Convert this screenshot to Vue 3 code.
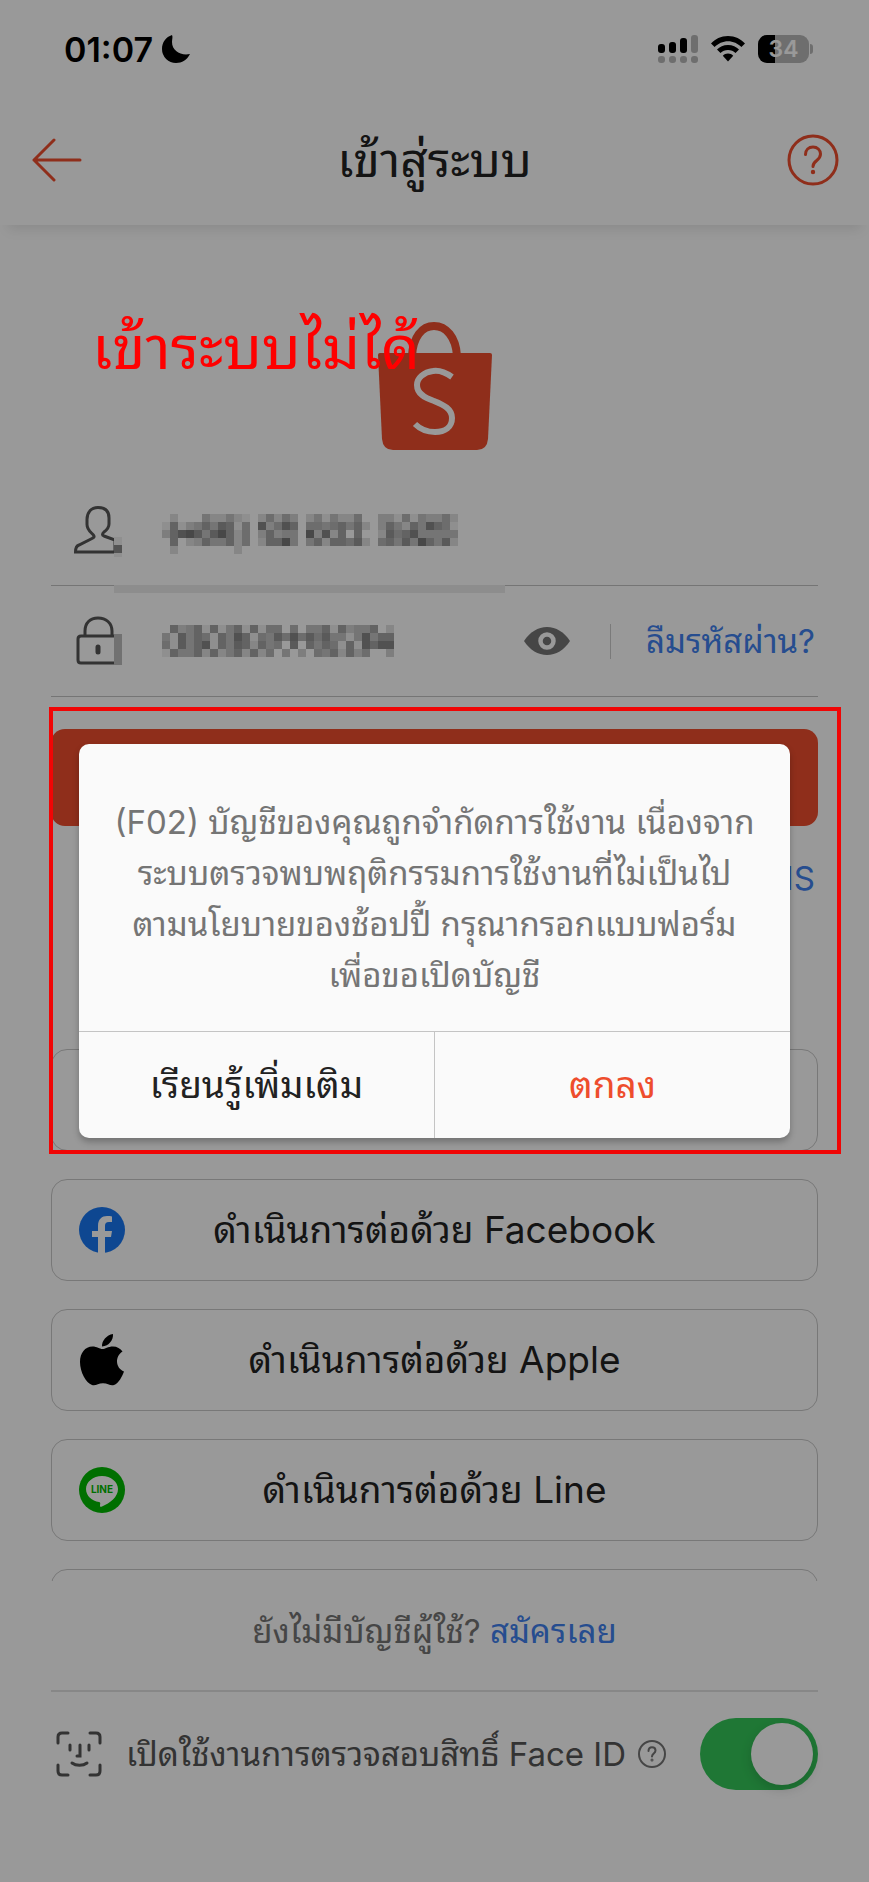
<script setup>
import { ref } from 'vue'

const faceId = ref(true)

const shades = ['', '#eee', '#dfdfdf', '#d2d2d2', '#c4c4c4', '#b6b6b6', '#a6a6a6', '#979797', '#888', '#787878']

const phoneMask = [
  '.2...422421.25253.2414225..3315143352',
  '16134647615.83586.55456462.3642648651',
  '36897479625.36344.93826.6..2756844444',
  '.6.23644625.26694.46266572.5647496472',
  '.2.......2...........................',
]
const passwordMask = [
  '.63461614616155.5.446163446.22',
  '41746516486154758575744148466',
  '517468164762645.7.64651618688',
  '16446262462625.4.3.5462635..3',
]

// Turns rows of shade digits into square cells
function cells(rows) {
  return rows.flatMap((row, y) =>
    [...row].map((c, x) => ({ x, y, fill: shades[Number(c)] || '' })).filter((cell) => cell.fill),
  )
}

const phoneCells = cells(phoneMask)
const passwordCells = cells(passwordMask)
</script>

<template>
  <div class="page">
    <div class="status">
      <span class="time">01:07</span>
      <svg class="moon" width="28" height="28" viewBox="0 0 28 28">
        <path d="M10 0C4 2 0 7 0 14a14 14 0 0 0 14 14c6 0 11-3 14-9-9 2-18-3-18-12 0-3 1-5 0-7z" />
      </svg>
      <span class="spacer"></span>
      <svg width="40" height="28" viewBox="0 0 40 28">
        <rect x="0" y="9" width="7" height="9" rx="3" />
        <rect x="11" y="7" width="7" height="11" rx="3" />
        <rect x="22" y="3" width="7" height="15" rx="3" />
        <g fill="#b8b8b8">
          <rect x="33" y="0" width="7" height="18" rx="3" />
          <rect x="0" y="21" width="7" height="7" rx="3" />
          <rect x="11" y="21" width="7" height="7" rx="3" />
          <rect x="22" y="21" width="7" height="7" rx="3" />
          <rect x="33" y="21" width="7" height="7" rx="3" />
        </g>
      </svg>
      <svg class="wifi" width="34" height="26" viewBox="0 0 34 26">
        <path d="M17 0C10 0 4 3 0 7.500L3.600 11C7 7.500 12 5.200 17 5.200s10 2.300 13.400 5.800L34 7.500C30 3 24 0 17 0z" />
        <path d="M17 9c-4.500 0-8.400 1.800-11 4.600l3.500 3.500c1.900-1.900 4.500-3.100 7.500-3.100s5.600 1.200 7.500 3.100l3.500-3.500C25.400 10.800 21.500 9 17 9z" />
        <path d="M17 17.600c-2 0-3.900.8-5.200 2.100L17 25.400l5.200-5.700c-1.300-1.300-3.200-2.100-5.200-2.100z" />
      </svg>
      <span class="battery"><b>34</b></span>
      <span class="nub"></span>
    </div>

    <header class="header">
      <button class="icon-button" aria-label="ย้อนกลับ">
        <svg width="50" height="44" viewBox="0 0 50 44" fill="none" stroke="#ee4d2d" stroke-width="3" stroke-linecap="round" stroke-linejoin="round">
          <path d="M22 2 2 22l20 20M2 22h46" />
        </svg>
      </button>
      <h1>เข้าสู่ระบบ</h1>
      <button class="icon-button" aria-label="ช่วยเหลือ">
        <svg width="52" height="52" viewBox="0 0 52 52" fill="none" stroke="#ee4d2d" stroke-width="3" stroke-linecap="round">
          <circle cx="26" cy="26" r="24" />
          <path d="M18.500 20.500c0-4.500 3.200-7.500 7.500-7.500s7.500 3 7.500 7c0 3-1.500 4.800-4 6.700-2.500 1.900-3.500 3-3.500 5.800" />
          <circle cx="26" cy="38" r="1.200" fill="#ee4d2d" stroke-width="2" />
        </svg>
      </button>
    </header>

    <main class="main">
      <svg class="bag" width="114" height="128" viewBox="0 0 114 128">
        <path d="M34 34C35 15 44 4 56 4s22 11 23 30" fill="none" stroke="#ee4d2d" stroke-width="8" />
        <path d="M2 31h110q2 0 2 2l-4 84q-1 11-11 11H15q-10 0-11-11L0 33q0-2 2-2z" fill="#ee4d2d" />
        <path d="M74 55C67 50 61 48 55 49 46 50 39 56 39 63c0 9 8 13 17 16 10 4 18 8 18 17 0 9-7 14-17 14-8 0-15-3-20-8" fill="none" stroke="#fff" stroke-width="6" />
      </svg>

      <form class="form" @submit.prevent>
        <div class="field">
          <label for="phone" aria-label="หมายเลขโทรศัพท์">
            <svg width="48" height="54" viewBox="0 0 48 54">
              <path d="M24 4.500c-7 0-11 5-11 12v5c0 5 3 7 6 10 2 2 1 3-1 4L5 42c-3 1-3.500 3-3.500 7H41V37l-11-4c-2-1-2-2 0-4 4-3 5-5 5-8v-6c0-7-4-10.500-11-10.500z" fill="none" stroke="#555" stroke-width="3" />
              <path d="M40 34h8v20h-8z" fill="#eee" />
              <path d="M40 42h8v8h-8z" fill="#8a8a8a" />
            </svg>
          </label>
          <span class="masked">
            <input id="phone" type="tel" autocomplete="off" />
            <svg class="mosaic" width="296" height="40" viewBox="0 0 37 5" shape-rendering="crispEdges">
              <rect v-for="c in phoneCells" :key="`${c.x}-${c.y}`" :x="c.x" :y="c.y" width="1" height="1" :fill="c.fill" />
            </svg>
          </span>
          <span class="strip"></span>
        </div>
        <div class="field">
          <label for="password" aria-label="รหัสผ่าน">
            <svg width="48" height="50" viewBox="0 0 48 50">
              <path d="M41 20H7q-3 0-3 3v21q0 3 3 3h34M11 20v-5C11 7 16 2 24 2s14 5 14 13v5" fill="none" stroke="#555" stroke-width="3" />
              <path d="M24 31v5" stroke="#555" stroke-width="5" stroke-linecap="round" />
              <path d="M40 18h8v31h-8z" fill="#bcbcbc" />
            </svg>
          </label>
          <span class="masked">
            <input id="password" type="password" autocomplete="off" />
            <svg class="mosaic" width="232" height="32" viewBox="0 0 29 4" shape-rendering="crispEdges">
              <rect v-for="c in passwordCells" :key="`${c.x}-${c.y}`" :x="c.x" :y="c.y" width="1" height="1" :fill="c.fill" />
            </svg>
          </span>
          <button type="button" class="icon-button eye" aria-label="แสดงรหัสผ่าน">
            <svg width="46" height="28" viewBox="0 0 46 28">
              <path d="M0 14C6 5 14 0 23 0s17 5 23 14c-6 9-14 14-23 14S6 23 0 14z" fill="#757575" />
              <circle cx="23" cy="14" r="6.500" fill="#757575" stroke="#fff" stroke-width="4.500" />
            </svg>
          </button>
          <a class="link forgot" href="#">ลืมรหัสผ่าน?</a>
        </div>

        <button class="submit" aria-label="เข้าสู่ระบบ"></button>
        <a class="link sms" href="#">SMS</a>
      </form>

      <div class="providers">
        <button class="provider" aria-label="ตัวเลือกอื่น"></button>
        <button class="provider">
          <svg width="46" height="46" viewBox="0 0 46 46">
            <circle cx="23" cy="23" r="23" fill="#1877f2" />
            <path d="M19 46V30h-6v-6h6v-5c0-7 4-10 9-10 2 0 4 0 5 .4V15h-3c-3 0-4 1.500-4 4v5h7l-1 6h-6v16z" fill="#fff" />
          </svg>
          <span>ดำเนินการต่อด้วย Facebook</span>
        </button>
        <button class="provider">
          <svg width="46" height="52" viewBox="0 0 46 52">
            <path d="M34 0c.4 6-4 12-11 12.500C22.500 7 27.500 1 34 0z" />
            <path d="M23.500 15c2.500 0 5.500-2.600 10.500-2.600 4 0 7.500 2 9.500 5-8 5-7 16.600 1.500 20-1.500 4.500-5.500 12-10 13.600-4 1-6-1.800-11-1.800s-7 2.800-11 1.800C7 49 1 38 1 28c0-9 5-15.500 12.500-15.500 4.500 0 7 2.500 10 2.500z" />
          </svg>
          <span>ดำเนินการต่อด้วย Apple</span>
        </button>
        <button class="provider">
          <svg width="46" height="46" viewBox="0 0 46 46">
            <circle cx="23" cy="23" r="23" fill="#00b900" />
            <path d="M23 9C14 9 7 15 7 22c0 7 6 12 13 13 2 .4 1 2 1 4 0 1 1 1 2 .5C31 36 39 30 39 22 39 15 32 9 23 9z" fill="#fff" />
            <text x="23" y="26" text-anchor="middle" font-size="10" font-weight="700" fill="#00b900">LINE</text>
          </svg>
          <span>ดำเนินการต่อด้วย Line</span>
        </button>
        <button class="provider" aria-label="ตัวเลือกเพิ่มเติม"></button>
      </div>
    </main>

    <footer class="footer">
      <p class="signup">ยังไม่มีบัญชีผู้ใช้? <a class="link" href="#">สมัครเลย</a></p>
      <div class="face">
        <svg width="46" height="46" viewBox="0 0 46 46" fill="none" stroke="#555" stroke-width="3" stroke-linecap="round">
          <path d="M2 12V6q0-4 4-4h6M34 2h6q4 0 4 4v6M44 34v6q0 4-4 4h-6M12 44H6q-4 0-4-4v-6" />
          <path d="M14 14v5M33 14v5M24 14v11h-3M16 32c4 3 11 3 15 0" />
        </svg>
        <label for="face-id">เปิดใช้งานการตรวจสอบสิทธิ์ Face ID</label>
        <svg width="28" height="28" viewBox="0 0 28 28" fill="none" stroke="#757575" stroke-width="2" stroke-linecap="round">
          <circle cx="14" cy="14" r="13" />
          <path d="M10.500 11c0-2.500 1.500-3.800 3.500-3.800s3.500 1.300 3.500 3.300c0 3-3.500 3-3.500 6" />
          <circle cx="14" cy="20" r=".5" />
        </svg>
        <input id="face-id" v-model="faceId" class="toggle" type="checkbox" role="switch" />
      </div>
    </footer>

    <div class="overlay">
      <section class="dialog" role="dialog" aria-modal="true">
        <p>
          (F02) บัญชีของคุณถูกจำกัดการใช้งาน เนื่องจาก<br />
          ระบบตรวจพบพฤติกรรมการใช้งานที่ไม่เป็นไป<br />
          ตามนโยบายของช้อปปี้ กรุณากรอกแบบฟอร์ม<br />
          เพื่อขอเปิดบัญชี
        </p>
        <div class="actions">
          <button>เรียนรู้เพิ่มเติม</button>
          <button class="primary">ตกลง</button>
        </div>
      </section>
    </div>

    <div class="frame"></div>
    <div class="note">เข้าระบบไม่ได้</div>
  </div>
</template>

<style>
body {
  background: #999;
}
</style>

<style scoped>
.page {
  position: relative;
  display: flex;
  flex-direction: column;
  min-height: 100vh;
  overflow: hidden;
  background: #fff;
  color: #222;
  font-family: Inter, "Noto Sans Thai Looped", Loma, Garuda, Waree, "Noto Sans Thai", "Noto Sans", sans-serif;
}
.page * {
  box-sizing: border-box;
}
button,
input {
  font: inherit;
  color: inherit;
  background: none;
  border: 0;
  padding: 0;
  margin: 0;
}
svg {
  display: block;
  flex: none;
}
.status {
  display: flex;
  align-items: center;
  height: 98px;
  padding: 0 56px 0 64px;
  color: #000;
}
.time {
  font-size: 34px;
  font-weight: 600;
}
.moon {
  margin-left: 9px;
}
.spacer {
  flex: 1;
}
.wifi {
  margin: 0 13px;
}
.battery {
  width: 51px;
  height: 28px;
  border-radius: 9px;
  background: linear-gradient(90deg, #000 17px, #b8b8b8 17px);
  color: #fff;
  text-align: center;
  font-size: 23px;
  line-height: 28px;
}
.battery b {
  font-weight: 600;
}
.nub {
  width: 3px;
  height: 10px;
  margin-left: 1px;
  border-radius: 0 3px 3px 0;
  background: #b8b8b8;
}
.header {
  display: flex;
  align-items: center;
  justify-content: space-between;
  height: 127px;
  padding: 0 30px 3px 32px;
  box-shadow: 0 12px 12px -8px rgba(0, 0, 0, 0.1);
}
h1 {
  margin: 0;
  font-size: 48px;
  line-height: 62px;
  font-weight: 400;
}
.icon-button {
  display: block;
}
.main {
  height: 1356px;
  overflow: hidden;
  padding: 97px 51px 0;
}
.bag {
  margin: 0 auto;
}
.form {
  display: flex;
  flex-direction: column;
  padding-top: 25px;
}
.field {
  position: relative;
  display: flex;
  align-items: center;
  height: 111px;
  padding-left: 23px;
  border-bottom: 1px solid #c4c4c4;
}
.masked {
  position: relative;
  flex: 1;
  margin-left: 40px;
}
.masked input {
  display: block;
  width: 100%;
  height: 60px;
  outline: 0;
}
.mosaic {
  position: absolute;
  left: 0;
  top: 14px;
}
.strip {
  position: absolute;
  left: 63px;
  bottom: -8px;
  width: 391px;
  height: 8px;
  background: #ebebeb;
}
.eye {
  margin-right: 40px;
}
.link {
  color: #4080ee;
  text-decoration: none;
}
.forgot {
  padding-left: 35px;
  padding-right: 3px;
  border-left: 1px solid #ccc;
  font-size: 33px;
  line-height: 35px;
}
.submit {
  height: 97px;
  margin-top: 32px;
  border-radius: 14px;
  background: #ee4d2d;
}
.sms {
  align-self: flex-end;
  margin-top: 32px;
  padding-right: 3px;
  font-size: 33px;
  line-height: 40px;
}
.providers {
  display: flex;
  flex-direction: column;
  gap: 28px;
  padding-top: 151px;
}
.provider {
  position: relative;
  display: flex;
  align-items: center;
  flex: none;
  height: 102px;
  padding: 0 27px;
  border: 1px solid #c8c8c8;
  border-radius: 16px;
  font-size: 37px;
}
.provider span {
  position: absolute;
  inset: 0;
  text-align: center;
  line-height: 100px;
}
.footer {
  height: 301px;
  padding: 0 51px;
}
.signup {
  height: 111px;
  margin: 0;
  border-bottom: 2px solid #e2e2e2;
  text-align: center;
  font-size: 33px;
  line-height: 100px;
  color: #757575;
}
.face {
  display: flex;
  align-items: center;
  height: 124px;
  padding-left: 5px;
  font-size: 33px;
  line-height: 50px;
  color: #555;
}
.face label {
  margin: 0 12px 0 24px;
  white-space: nowrap;
}
.toggle {
  appearance: none;
  width: 118px;
  height: 72px;
  margin-left: auto;
  padding: 5px;
  border-radius: 36px;
  background: #ccc;
}
.toggle::before {
  content: "";
  display: block;
  width: 62px;
  height: 62px;
  border-radius: 50%;
  background: #fff;
  box-shadow: 0 4px 12px rgba(0, 0, 0, 0.16);
}
.toggle:checked {
  background: #34c759;
}
.toggle:checked::before {
  margin-left: auto;
}
.overlay {
  position: absolute;
  inset: 0;
  display: flex;
  flex-direction: column;
  justify-content: center;
  padding: 0 79px;
  background: rgba(0, 0, 0, 0.4);
}
.dialog {
  border-radius: 10px;
  background: #fafafa;
  box-shadow: 0 4px 6px rgba(0, 0, 0, 0.25);
}
.dialog p {
  margin: 0;
  padding: 53px 0 30px;
  text-align: center;
  white-space: nowrap;
  font-size: 33px;
  line-height: 51px;
  color: #757575;
}
.actions {
  display: flex;
  border-top: 1px solid #c4c4c4;
}
.actions button {
  flex: 1;
  height: 106px;
  font-size: 37px;
  line-height: 50px;
}
.actions .primary {
  border-left: 1px solid #c4c4c4;
  color: #ee4d2d;
}
.frame {
  position: absolute;
  top: 707px;
  left: 49px;
  right: 28px;
  height: 447px;
  border: 4px solid #f00505;
}
.note {
  position: absolute;
  top: 302px;
  left: 92px;
  color: #f00;
  font-size: 60px;
  line-height: 90px;
  white-space: nowrap;
}
</style>
